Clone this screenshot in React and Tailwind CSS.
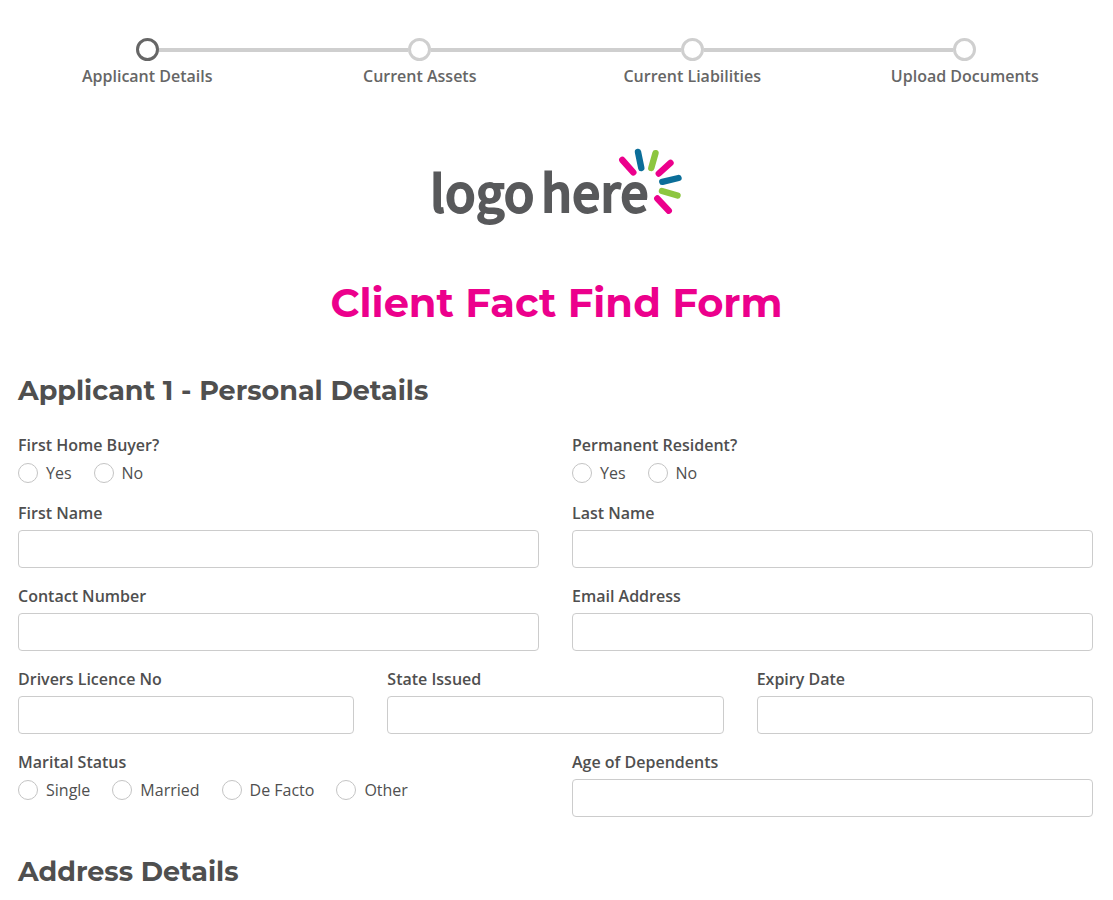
const steps = ['Applicant Details', 'Current Assets', 'Current Liabilities', 'Upload Documents'];

function Stepper({ current }) {
  return (
    <ol className="grid grid-cols-4 pt-[38px] pr-3 pl-[11px]">
      {steps.map((step, i) => (
        <li
          key={step}
          aria-current={i === current ? 'step' : undefined}
          className="flex flex-col items-center gap-[3px]"
        >
          <div className="flex w-full items-center">
            <span className={`h-1 flex-1 ${i === 0 ? '' : 'bg-[#cfcfcf]'}`} />
            <span
              className={`size-[23px] rounded-full border-3 bg-white ${
                i === current ? 'border-[#666666]' : 'border-[#cfcfcf]'
              }`}
            />
            <span className={`h-1 flex-1 ${i === steps.length - 1 ? '' : 'bg-[#cfcfcf]'}`} />
          </div>
          <span className="text-center font-semibold text-[#666666]">{step}</span>
        </li>
      ))}
    </ol>
  );
}

function Logo() {
  return (
    <svg
      viewBox="0 0 275 95"
      className="mx-auto w-[275px]"
      role="img"
      aria-label="logo here"
    >
      <g
        fill="#58595b"
        stroke="#58595b"
        strokeWidth="1.8"
        fontFamily="'Noto Sans CJK SC', 'Open Sans', sans-serif"
        fontSize="50"
        fontWeight="500"
      >
        <text x="11" y="72">logo</text>
        <text x="122" y="72">here</text>
      </g>
      <g strokeWidth="6.4" strokeLinecap="round" fill="none">
        <path d="M203.3 20 L214.3 32.3" stroke="#ec008c" />
        <path d="M219 12 L222.3 28" stroke="#0b6e99" />
        <path d="M236.5 13.2 L232.3 28" stroke="#8dc63f" />
        <path d="M251.5 22.8 L239.8 33.5" stroke="#ec008c" />
        <path d="M259.5 38 L243.3 41.8" stroke="#0b6e99" />
        <path d="M243 51 L258.5 55.5" stroke="#8dc63f" />
        <path d="M238.3 58.5 L249.8 70.7" stroke="#ec008c" />
      </g>
    </svg>
  );
}

function SectionTitle({ children }) {
  return (
    <h2 className="font-['Montserrat','Inter',sans-serif] text-[27px] leading-9 font-bold text-[#4f4f4f]">
      {children}
    </h2>
  );
}

function TextField({ label, name, type = 'text' }) {
  return (
    <div>
      <label htmlFor={name} className="block font-semibold">{label}</label>
      <input
        id={name}
        name={name}
        type={type}
        className="mt-[5px] block h-[38px] w-full rounded border border-[#cccccc] bg-white px-3 focus:border-[#999999] focus:outline-none"
      />
    </div>
  );
}

function RadioField({ label, name, options }) {
  return (
    <fieldset>
      <legend className="font-semibold">{label}</legend>
      <div className="flex flex-wrap gap-x-[22px] pt-1">
        {options.map((option) => (
          <label key={option} className="flex items-center gap-2">
            <input
              type="radio"
              name={name}
              value={option}
              className="size-5 appearance-none rounded-full border border-[#c4c4c4] bg-white checked:border-6 checked:border-[#666666]"
            />
            {option}
          </label>
        ))}
      </div>
    </fieldset>
  );
}

export default function App() {
  return (
    <div className="min-h-screen bg-white font-['Open_Sans',sans-serif] text-base text-[#4f4f4f]">
      <Stepper current={0} />

      <header className="mt-[52px]">
        <Logo />
        <h1 className="mt-10 text-center font-['Montserrat','Inter',sans-serif] text-[40px] leading-14 font-bold text-[#ec008c]">
          Client Fact Find Form
        </h1>
      </header>

      <form className="pt-[42px] pr-5 pb-8 pl-[18px]">
        <SectionTitle>Applicant 1 - Personal Details</SectionTitle>

        <div className="mt-6 space-y-4">
          <div className="grid grid-cols-2 gap-x-[33px]">
            <RadioField label="First Home Buyer?" name="firstHomeBuyer" options={['Yes', 'No']} />
            <RadioField label="Permanent Resident?" name="permanentResident" options={['Yes', 'No']} />
          </div>
          <div className="grid grid-cols-2 gap-x-[33px]">
            <TextField label="First Name" name="firstName" />
            <TextField label="Last Name" name="lastName" />
          </div>
          <div className="grid grid-cols-2 gap-x-[33px]">
            <TextField label="Contact Number" name="contactNumber" type="tel" />
            <TextField label="Email Address" name="email" type="email" />
          </div>
          <div className="grid grid-cols-3 gap-x-[33px]">
            <TextField label="Drivers Licence No" name="licenceNo" />
            <TextField label="State Issued" name="stateIssued" />
            <TextField label="Expiry Date" name="expiryDate" />
          </div>
          <div className="grid grid-cols-2 gap-x-[33px]">
            <RadioField
              label="Marital Status"
              name="maritalStatus"
              options={['Single', 'Married', 'De Facto', 'Other']}
            />
            <TextField label="Age of Dependents" name="dependentsAge" />
          </div>
        </div>

        <div className="mt-[37px]">
          <SectionTitle>Address Details</SectionTitle>
        </div>
      </form>
    </div>
  );
}
